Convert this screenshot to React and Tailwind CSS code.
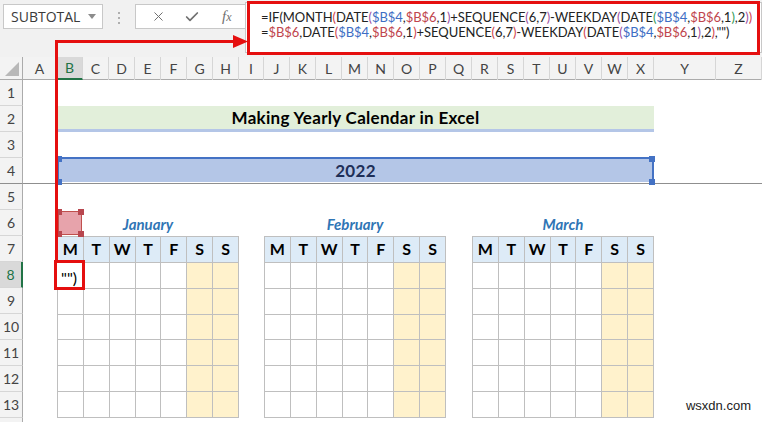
import React from 'react';
import { X, Check } from 'lucide-react';

const LETTERS = 'ABCDEFGHIJKLMNOPQRSTUVWXYZ'.split('');
const DAYS = ['M', 'T', 'W', 'T', 'F', 'S', 'S'];
const ROWS = [1, 2, 3, 4, 5, 6, 7, 8, 9, 10, 11, 12, 13, 14];

const K = 'text-[#222]';
const BLUE = 'text-[#3E6EC4]';
const REF = 'text-[#C0454D]';
const PAREN2 = 'text-[#D0434B]';
const PAREN3 = 'text-[#9B4F9F]';
const PAREN4 = 'text-[#2F9B57]';

const line1 = [
  ['=IF(MONTH', K], ['(', PAREN2], ['DATE', K], ['(', PAREN3], ['$B$4', BLUE], [',', K], ['$B$6', REF],
  [',1', K], [')', PAREN3], ['+SEQUENCE', K], ['(', PAREN3], ['6,7', K], [')', PAREN3], ['-WEEKDAY', K],
  ['(', PAREN3], ['DATE', K], ['(', PAREN4], ['$B$4', BLUE], [',', K], ['$B$6', REF], [',1', K],
  [')', PAREN4], [',2', K], [')', PAREN3], [')', PAREN2],
];

const line2 = [
  ['=', K], ['$B$6', REF], [',DATE', K], ['(', PAREN2], ['$B$4', BLUE], [',', K], ['$B$6', REF], [',1', K],
  [')', PAREN2], ['+SEQUENCE', K], ['(', PAREN2], ['6,7', K], [')', PAREN2], ['-WEEKDAY', K], ['(', PAREN2],
  ['DATE', K], ['(', PAREN3], ['$B$4', BLUE], [',', K], ['$B$6', REF], [',1', K], [')', PAREN3], [',2', K],
  [')', PAREN2], [',""', K], [')', K],
];

const FormulaLine = ({ tokens }) => (
  <div className="whitespace-nowrap">
    {tokens.map(([t, c], i) => (
      <span key={i} className={c}>{t}</span>
    ))}
  </div>
);

// small square handles on a range highlight
const Handles = ({ color }) => (
  <>
    <span className={`absolute -left-[3px] -top-[3px] w-[6px] h-[6px] ${color}`} />
    <span className={`absolute -right-[3px] -top-[3px] w-[6px] h-[6px] ${color}`} />
    <span className={`absolute -left-[3px] -bottom-[3px] w-[6px] h-[6px] ${color}`} />
    <span className={`absolute -right-[3px] -bottom-[3px] w-[6px] h-[6px] ${color}`} />
  </>
);

const MonthTable = ({ name, cols }) => (
  <>
    <div className={`${cols} row-[6] flex items-end justify-center pb-[1px] text-[15px] font-bold italic text-[#2F75B5]`}>
      {name}
    </div>
    <div className={`${cols} row-[7/14] grid grid-cols-7 grid-rows-7 border-l border-t border-[#BFBFBF]`}>
      {DAYS.map((d, i) => (
        <div key={'h' + i} className="bg-[#DDEBF7] border-r border-b border-[#BFBFBF] flex items-center justify-center text-[16px] font-bold text-black">
          {d}
        </div>
      ))}
      {Array.from({ length: 42 }).map((_, i) => (
        <div
          key={i}
          className={`border-r border-b border-[#BFBFBF] ${i % 7 >= 5 ? 'bg-[#FFF2CC]' : 'bg-white'}`}
        />
      ))}
    </div>
  </>
);

export default function App() {
  return (
    <div className="relative w-[762px] h-[422px] overflow-hidden bg-white font-['Lato',sans-serif]">
      {/* name box + formula bar */}
      <div className="flex items-start h-[57px] bg-[#F1F1F1]">
        <div className="shrink-0 ml-[3px] mt-[4px] w-[100px] h-[25px] bg-white border border-[#C8C8C8] flex items-center pl-[7px] pr-[6px]">
          <span className="font-['Open_Sans',sans-serif] text-[14px] text-[#3A3A3A]">SUBTOTAL</span>
          <span className="ml-auto w-0 h-0 border-l-[4px] border-r-[4px] border-t-[5px] border-l-transparent border-r-transparent border-t-[#8C8C8C]" />
        </div>
        <div className="shrink-0 w-[32px] flex flex-col items-center gap-[3px] mt-[12px]">
          <span className="w-[2px] h-[2px] bg-[#AFAFAF]" />
          <span className="w-[2px] h-[2px] bg-[#AFAFAF]" />
          <span className="w-[2px] h-[2px] bg-[#AFAFAF]" />
        </div>
        <div className="shrink-0 mt-[4px] w-[110px] h-[25px] bg-white border border-[#C8C8C8] border-r-0 flex items-center pl-[15px] text-[#707070]">
          <X size={15} strokeWidth={1.6} />
          <Check size={16} strokeWidth={2.6} className="ml-[18px]" />
          <span className="ml-[22px] font-['Liberation_Serif',serif] italic text-[15px]">f<span className="text-[12px]">x</span></span>
        </div>
        <div className="flex-1 min-w-0 overflow-hidden mt-[2px] h-[51px] bg-white border border-[#C8C8C8] pl-[15px] pt-[7px] text-[13px] tracking-[-0.05px] leading-[15px] font-['Lato',sans-serif]">
          <FormulaLine tokens={line1} />
          <FormulaLine tokens={line2} />
        </div>
      </div>

      {/* column headings */}
      <div className="flex h-[23px]">
        <div className="w-[23px] shrink-0 bg-[#F3F3F3] border-r border-b border-[#ABABAB] relative">
          <span className="absolute right-[3px] bottom-[3px] w-0 h-0 [border-bottom:14px_solid_#B8B8B8] [border-left:14px_solid_transparent]" />
        </div>
        <div className="flex-1 grid grid-cols-[34px_repeat(7,26px)_25px_repeat(7,26px)_26px_repeat(7,26px)_62px_1fr] bg-[#F3F3F3] border-b border-[#ABABAB]">
          {LETTERS.map((l) => (
            <div
              key={l}
              className={`flex items-center justify-center text-[14px] border-r border-[#D6D6D6] ${
                l === 'B' ? 'bg-[#D9D9D9] text-[#217346] border-b-2 border-b-[#217346]' : 'text-[#444]'
              }`}
            >
              {l}
            </div>
          ))}
        </div>
      </div>

      {/* sheet body */}
      <div className="flex">
        <div className="w-[23px] shrink-0 flex flex-col bg-[#F3F3F3]">
          {ROWS.map((r) => (
            <div
              key={r}
              className={`h-[26px] shrink-0 flex items-center justify-center text-[14px] border-b ${
                r === 4 ? 'border-[#8F8F8F]' : 'border-[#D6D6D6]'
              } ${r === 8 ? 'bg-[#D9D9D9] text-[#217346] border-r-2 border-r-[#217346]' : 'text-[#444] border-r border-r-[#ABABAB]'}`}
            >
              {r}
            </div>
          ))}
        </div>

        <div className="flex-1 grid grid-cols-[34px_repeat(7,26px)_25px_repeat(7,26px)_26px_repeat(7,26px)_62px_1fr] grid-rows-[repeat(14,26px)]">
          {/* row 2: title */}
          <div className="col-[2/25] row-[2] bg-[#E2EFDA] border-b-[3px] border-[#B4C6E7] flex items-center justify-center text-[17px] tracking-[0.3px] font-bold text-black">
            Making Yearly Calendar in Excel
          </div>

          {/* freeze pane line under row 4 */}
          <div className="col-[1/-1] row-[4] self-end h-px bg-[#8F8F8F]" />

          {/* row 4: year, highlighted as $B$4 */}
          <div className="col-[2/25] row-[4] relative -mt-[1px] mb-[2px] bg-[#B4C6E7] border-t-2 border-x-2 border-[#4472C4] flex items-center justify-center text-[17px] tracking-[0.3px] font-bold text-[#1F2F57]">
            2022
            <Handles color="bg-[#4472C4]" />
          </div>

          {/* B6 highlighted as $B$6 */}
          <div className="col-[2] row-[6] relative m-[1px] bg-[#E7A3AB] border border-[#C0504D]">
            <Handles color="bg-[#B8474F]" />
          </div>

          <MonthTable name="January" cols="col-[2/9]" />
          <MonthTable name="February" cols="col-[10/17]" />
          <MonthTable name="March" cols="col-[18/25]" />

          {/* B8 in edit mode: only the tail of the wrapped formula shows */}
          <div className="col-[2] row-[8] z-10 bg-white overflow-hidden flex flex-col justify-end pl-[4px] text-[16px] leading-[20px] text-black">
            "")
          </div>

          <div className="col-[25/27] row-[13] flex items-end justify-end pr-[11px] pb-[3px] font-['Liberation_Sans',sans-serif] text-[13px] text-[#222]">
            wsxdn.com
          </div>
        </div>
      </div>

      {/* red callouts */}
      <div className="absolute left-[247px] top-[1px] w-[513px] h-[54px] border-[3px] border-[#E50F0F]" />
      <div className="absolute left-[54px] top-[260px] w-[31px] h-[30px] border-[3px] border-[#E50F0F] z-20" />
      <svg className="absolute inset-0 z-20 pointer-events-none" width="762" height="422">
        <path d="M56.5 262 V41.5 H236" fill="none" stroke="#E50F0F" strokeWidth="3" />
        <polygon points="233,35 248,41.5 233,48" fill="#E50F0F" />
      </svg>
    </div>
  );
}
